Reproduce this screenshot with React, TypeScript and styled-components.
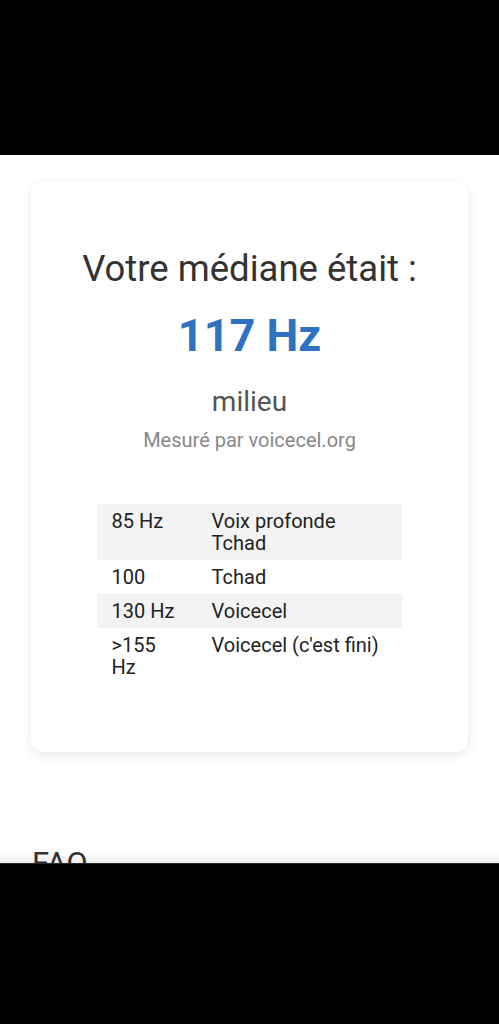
import React, { FC } from 'react';
import styled, { createGlobalStyle } from 'styled-components';

const GlobalStyle = createGlobalStyle`
  html, body {
    margin: 0;
    padding: 0;
    background: #000000;
  }
  body {
    font-family: Roboto, 'Noto Sans', Arial, sans-serif;
  }
`;

const Screen = styled('div')`
  width: 499px;
  height: 1024px;
  display: flex;
  flex-direction: column;
  background: #000000;
`;

const StatusBand = styled('div')`
  height: 155px;
  flex: none;
  background: #000000;
`;

const Viewport = styled('div')`
  position: relative;
  height: 708px;
  flex: none;
  overflow: hidden;
  background: #ffffff;
  padding: 27px 31px 0 31px;
  box-sizing: border-box;

  &::after {
    content: '';
    position: absolute;
    left: 0;
    right: 0;
    bottom: 0;
    height: 10px;
    background: linear-gradient(to bottom, rgba(0, 0, 0, 0), rgba(0, 0, 0, 0.07));
  }
`;

const NavBand = styled('div')`
  flex: 1;
  background: #000000;
  border-top: 1px solid #2a2a2a;
`;

const ResultCard = styled('section')`
  display: flex;
  flex-direction: column;
  align-items: center;
  padding: 64px 0 68px 0;
  background: #ffffff;
  border-radius: 12px;
  box-shadow: 0 3px 12px rgba(0, 0, 0, 0.09);
`;

const Heading = styled('h2')`
  margin: 0;
  font-size: 36.5px;
  font-weight: 400;
  line-height: 46px;
  color: #333333;
`;

const Frequency = styled('div')`
  margin-top: 16px;
  font-size: 45px;
  font-weight: 700;
  line-height: 55px;
  color: #2f72c4;
`;

const Category = styled('div')`
  margin-top: 23px;
  font-size: 28px;
  line-height: 32px;
  color: #555555;
`;

const Source = styled('div')`
  margin-top: 10px;
  font-size: 20px;
  line-height: 24px;
  color: #888888;
`;

const RangeTable = styled('table')`
  width: 70%;
  margin-top: 52px;
  border-collapse: collapse;
  font-size: 20px;
  line-height: 22px;
  color: #222222;
`;

const RangeRow = styled('tr')<{ $shaded: boolean }>`
  background: ${(p) => (p.$shaded ? '#f3f3f3' : '#ffffff')};
`;

const Cell = styled('td')<{ $first?: boolean }>`
  padding: 6px 15px 6px 15px;
  vertical-align: top;
  width: ${(p) => (p.$first ? '70px' : 'auto')};
`;

const FaqTitle = styled('h3')`
  margin: 94px 0 0 1px;
  font-size: 31px;
  font-weight: 400;
  line-height: 36px;
  color: #333333;
`;

interface RangeItem {
  pitch: string;
  label: string;
}

const ranges: RangeItem[] = [
  { pitch: '85 Hz', label: 'Voix profonde Tchad' },
  { pitch: '100', label: 'Tchad' },
  { pitch: '130 Hz', label: 'Voicecel' },
  { pitch: '>155 Hz', label: "Voicecel (c'est fini)" },
];

const App: FC = () => {
  return (
    <Screen>
      <GlobalStyle />
      <StatusBand />
      <Viewport>
        <ResultCard>
          <Heading>Votre médiane était :</Heading>
          <Frequency>117 Hz</Frequency>
          <Category>milieu</Category>
          <Source>Mesuré par voicecel.org</Source>
          <RangeTable>
            <tbody>
              {ranges.map((item, i) => (
                <RangeRow key={`range-${item.pitch}`} $shaded={i % 2 === 0}>
                  <Cell $first>{item.pitch}</Cell>
                  <Cell>{item.label}</Cell>
                </RangeRow>
              ))}
            </tbody>
          </RangeTable>
        </ResultCard>
        <FaqTitle>FAQ</FaqTitle>
      </Viewport>
      <NavBand />
    </Screen>
  );
};

export default App;
